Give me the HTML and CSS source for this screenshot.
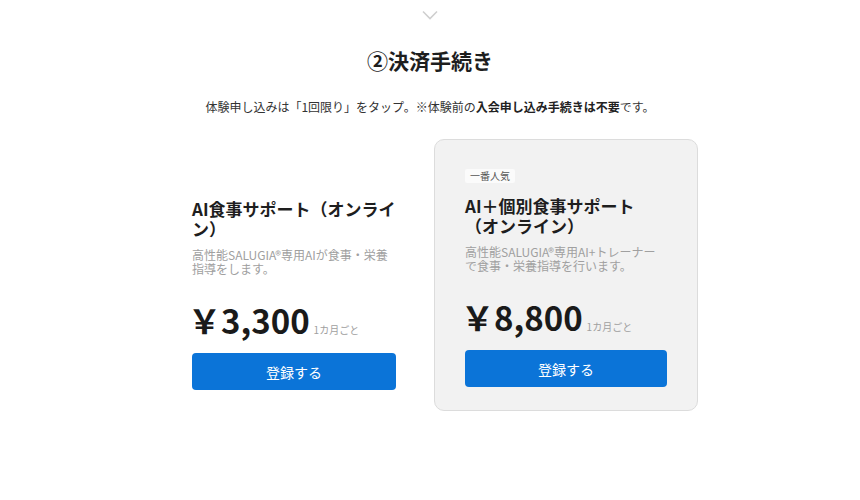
FILE: index.html
```html
<!DOCTYPE html>
<html lang="ja">
<head>
<meta charset="utf-8">
<link rel="stylesheet" href="styles.css">
</head>
<body>
<main class="page">
  <svg class="chevron" width="16" height="10" viewBox="0 0 16 10"><path d="M1 1.5 L8 8.5 L15 1.5" fill="none" stroke="#cfcfcf" stroke-width="1.6"/></svg>
  <h2 class="heading">②決済手続き</h2>
  <p class="lead">体験申し込みは「1回限り」をタップ。※体験前の<b>入会申し込み手続きは不要</b>です。</p>
  <section class="plans">
    <div class="plan plan-basic">
      <h3 class="plan-title">AI食事サポート（オンライン）</h3>
      <p class="plan-desc">高性能SALUGIA®専用AIが食事・栄養<br>指導をします。</p>
      <div class="price"><span class="amount">￥3,300</span><span class="per">1カ月ごと</span></div>
      <button class="btn">登録する</button>
    </div>
    <div class="plan plan-featured">
      <span class="badge">一番人気</span>
      <h3 class="plan-title">AI＋個別食事サポート<br>（オンライン）</h3>
      <p class="plan-desc">高性能SALUGIA®専用AI+トレーナー<br>で食事・栄養指導を行います。</p>
      <div class="price"><span class="amount">￥8,800</span><span class="per">1カ月ごと</span></div>
      <button class="btn">登録する</button>
    </div>
  </section>
</main>
</body>
</html>
```
FILE: styles.css
```css
* { box-sizing: border-box; }
html, body { margin: 0; background: #fff; }
body {
  font-family: "Noto Sans CJK JP", "Noto Sans", sans-serif;
  color: #222;
}
.page {
  display: flex;
  flex-direction: column;
  align-items: center;
}
.chevron {
  display: block;
  margin-top: 10px;
}
.heading {
  margin: 25px 0 0;
  font-size: 21px;
  line-height: 30px;
  font-weight: 700;
  color: #1e1e1e;
}
.lead {
  margin: 23px 0 0;
  font-size: 12px;
  line-height: 18px;
  color: #333;
}
.lead b { font-weight: 700; color: #222; }
.plans {
  margin-top: 23px;
  display: flex;
  gap: 8px;
  align-items: stretch;
}
.plan {
  width: 264px;
  display: flex;
  flex-direction: column;
  align-items: flex-start;
}
.plan-basic {
  padding: 30px 30px 21px;
  justify-content: flex-end;
}
.plan-featured {
  padding: 29px 30px 23px 30px;
  background: #f2f2f2;
  border: 1px solid #dcdcdc;
  border-radius: 10px;
}
.badge {
  display: inline-block;
  font-size: 10px;
  line-height: 14px;
  padding: 0 5px;
  background: #fbfbfb;
  color: #555;
  border-radius: 2px;
}
.plan-title {
  margin: 13px 0 0;
  font-size: 17px;
  line-height: 20px;
  font-weight: 700;
  color: #1e1e1e;
}
.plan-basic .plan-title { margin-top: 0; }
.plan-desc {
  margin: 9px 0 0;
  font-size: 12px;
  line-height: 14px;
  color: #a0a0a0;
}
.price {
  margin-top: 26px;
  display: flex;
  align-items: baseline;
  gap: 4px;
}
.amount {
  font-size: 33px;
  line-height: 36px;
  font-weight: 700;
  color: #1a1a1a;
  margin-left: -4px;
}
.per {
  font-size: 10px;
  color: #a0a0a0;
}
.btn {
  margin-top: 15px;
  width: 100%;
  height: 37px;
  border: 0;
  border-radius: 4px;
  background: #0b74d8;
  color: #fff;
  font-family: inherit;
  font-size: 14px;
}
```
